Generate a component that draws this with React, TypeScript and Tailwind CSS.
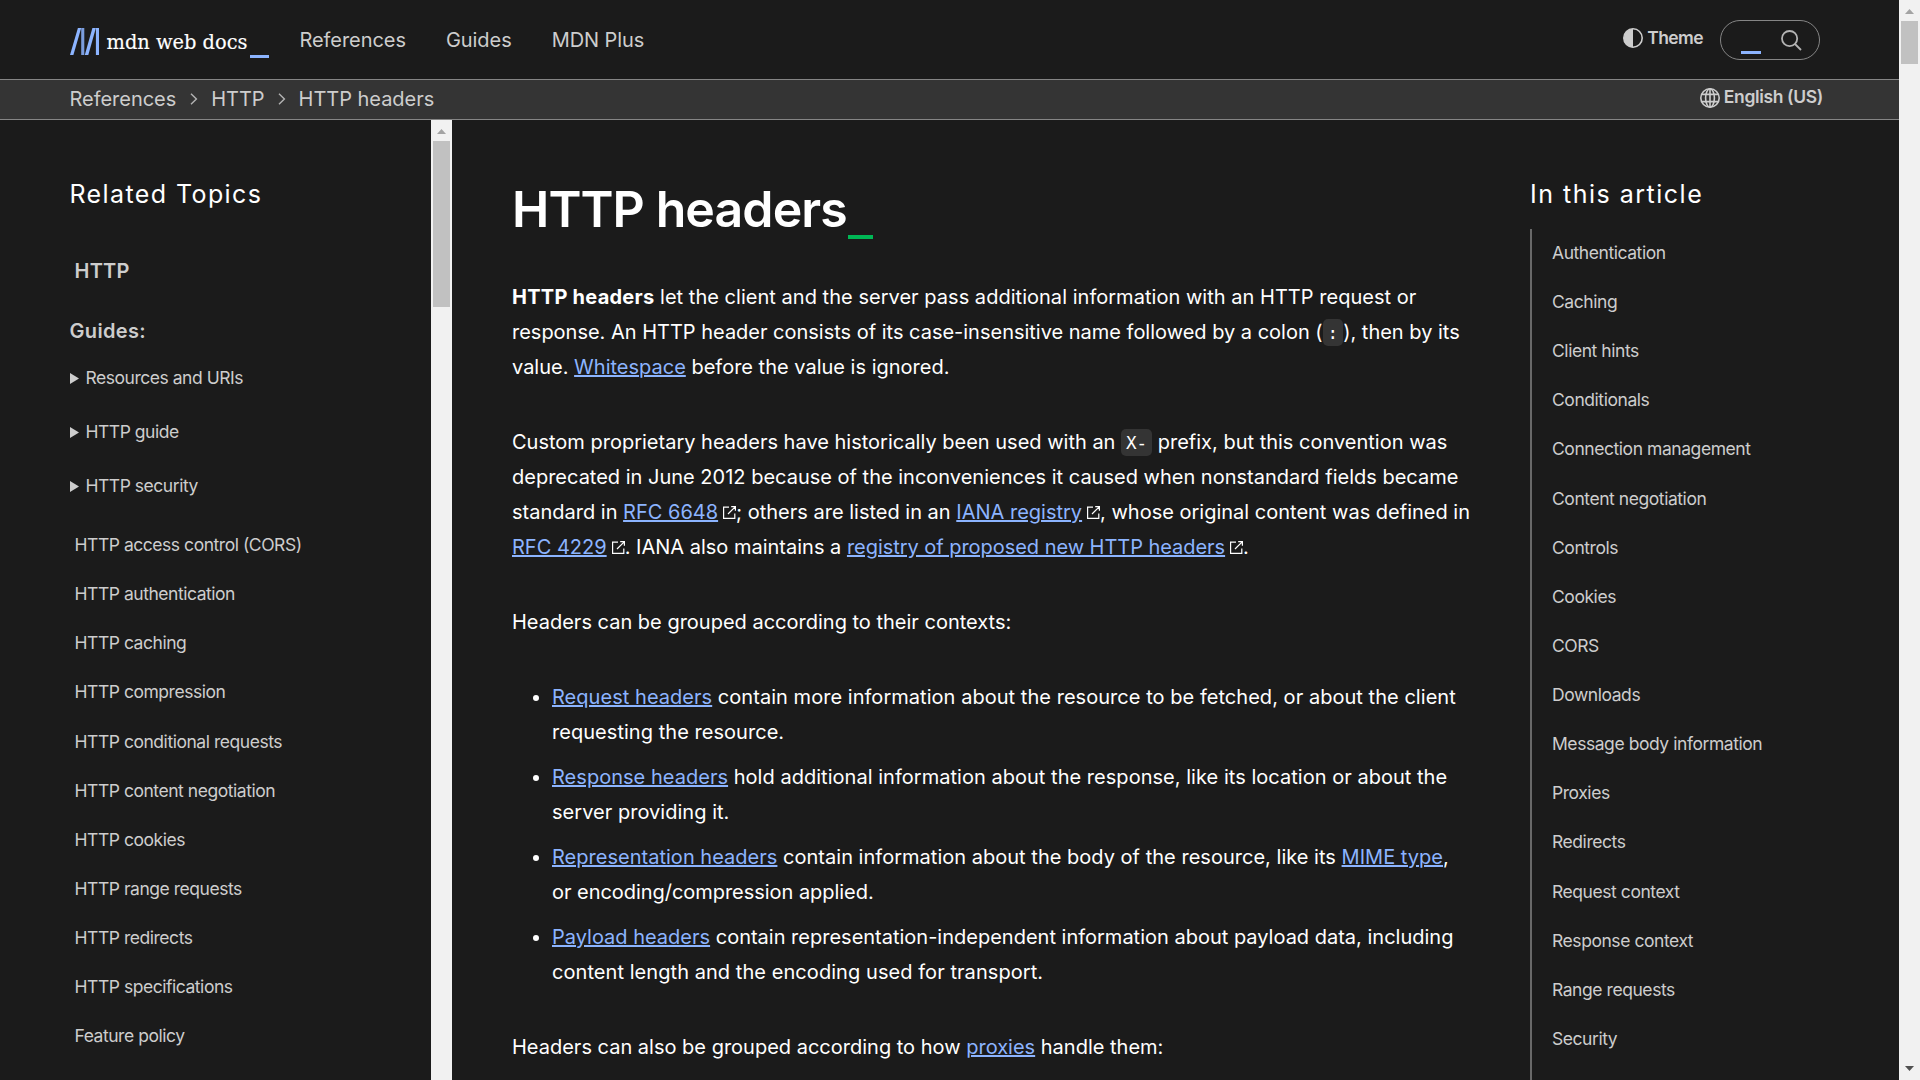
import React from "react";

const related = [
  "HTTP access control (CORS)",
  "HTTP authentication",
  "HTTP caching",
  "HTTP compression",
  "HTTP conditional requests",
  "HTTP content negotiation",
  "HTTP cookies",
  "HTTP range requests",
  "HTTP redirects",
  "HTTP specifications",
  "Feature policy",
];

const toc = [
  "Authentication",
  "Caching",
  "Client hints",
  "Conditionals",
  "Connection management",
  "Content negotiation",
  "Controls",
  "Cookies",
  "CORS",
  "Downloads",
  "Message body information",
  "Proxies",
  "Redirects",
  "Request context",
  "Response context",
  "Range requests",
  "Security",
];

function Logo() {
  return (
    <svg width="200" height="36" viewBox="0 0 200 36" className="block">
      <g fill="#8cb4ff">
        <path d="M7.9 4H11.2L3.4 31H0z" />
        <path d="M11.2 4h3.1v27h-3.1z" opacity="0.85" />
        <path d="M22.4 4h3.5l-7.6 27h-3.5z" />
        <path d="M25.9 4H29v27h-3.1z" />
        <path d="M180 31h19v3h-19z" />
      </g>
      <text
        x="36.5"
        y="25"
        fill="#fff"
        stroke="#fff"
        strokeWidth="0.15"
        fontFamily="'DejaVu Serif', serif"
        fontSize="21"
        textLength="141"
        lengthAdjust="spacingAndGlyphs"
      >
        mdn web docs
      </text>
    </svg>
  );
}

function Chevron() {
  return (
    <svg width="8" height="12" viewBox="0 0 8 12" fill="none" stroke="#b3b3b3" strokeWidth="1.4">
      <path d="M1 0.8l5.4 5.2L1 11.2" />
    </svg>
  );
}

function ThemeIcon() {
  return (
    <svg width="20" height="20" viewBox="0 0 20 20">
      <circle cx="10" cy="10" r="9.2" fill="none" stroke="#cdcdcd" strokeWidth="1.6" />
      <path d="M10 0.8a9.2 9.2 0 0 0 0 18.4z" fill="#cdcdcd" />
    </svg>
  );
}

function SearchIcon() {
  return (
    <svg width="21" height="21" viewBox="0 0 21 21" fill="none" stroke="#b3b3b3" strokeWidth="1.8">
      <circle cx="8.6" cy="8.6" r="7.6" />
      <path d="M14 14l6 6" />
    </svg>
  );
}

function Globe() {
  return (
    <svg width="20" height="20" viewBox="0 0 20 20" fill="none" stroke="#cdcdcd" strokeWidth="1.6">
      <circle cx="10" cy="10" r="9.2" />
      <ellipse cx="10" cy="10" rx="4.4" ry="9.2" />
      <path d="M10 .8v18.4M1.8 6.4h16.4M1.8 13.6h16.4" />
    </svg>
  );
}

function External() {
  return (
    <svg width="13" height="13" viewBox="0 0 13 13" fill="none" stroke="#fff" className="ml-[5px] inline-block align-baseline">
      <path d="M6 1.2H.6v11.2h11.2V7.5" strokeWidth="1.2" />
      <path d="M8.2.6h4.2v4.2M12.2.8L5 8" strokeWidth="1.2" />
    </svg>
  );
}

function Link({ children }: { children: React.ReactNode }) {
  return (
    <a className="text-[#8cb4ff] underline decoration-2">{children}</a>
  );
}

function Code({ children }: { children: React.ReactNode }) {
  return (
    <code className="rounded-[5px] bg-[#343434] px-[5px] py-[3.5px] align-[1px] font-['DejaVu_Sans_Mono',monospace] text-[17.5px] leading-none">
      {children}
    </code>
  );
}

function Scrollbar({ thumb, down }: { thumb: string; down?: boolean }) {
  return (
    <div className="flex h-full w-[21px] shrink-0 flex-col items-center bg-[#f1f1f1]">
      <svg width="21" height="21" viewBox="0 0 21 21" className="shrink-0">
        <path d="M6 14h9l-4.5-5z" fill="#a3a3a3" />
      </svg>
      <div className={"w-[17px] shrink-0 bg-[#c1c1c1] " + thumb} />
      {down && (
        <svg width="21" height="21" viewBox="0 0 21 21" className="mt-auto shrink-0">
          <path d="M6 7h9l-4.5 5z" fill="#505050" />
        </svg>
      )}
    </div>
  );
}

export default function App() {
  return (
    <div className="flex h-[1080px] w-[1920px] overflow-hidden bg-[#1b1b1b] font-[Inter,sans-serif] text-[#cdcdcd]">
      <div className="flex min-w-0 flex-1 flex-col">
        <header className="flex h-20 shrink-0 items-start border-b border-[#858585] pl-[70px] pr-[79px]">
          <div className="mt-6 w-[229.5px]">
            <Logo />
          </div>
          <nav className="mt-[25px] flex gap-10 text-[20px] leading-[30px] tracking-[-0.06px]">
            <a>References</a>
            <a>Guides</a>
            <a>MDN Plus</a>
          </nav>
          <div className="ml-auto mt-7 flex items-start gap-1 text-[17.5px] font-semibold leading-5 tracking-[-0.6px]">
            <ThemeIcon />
            <span>Theme</span>
          </div>
          <div className="ml-[17px] mt-5 flex h-10 w-[100px] rounded-full border border-[#858585] pl-5">
            <div className="mt-[30px] h-[3px] w-5 bg-[#8cb4ff]" />
            <div className="ml-[19.5px] mt-[9px]">
              <SearchIcon />
            </div>
          </div>
        </header>

        <div className="flex h-10 shrink-0 items-start justify-between border-b border-[#858585] bg-[#343434] pl-[69.5px] pr-[76px]">
          <div className="mt-[3px] flex items-center text-[20px] leading-[32px] tracking-[-0.03px]">
            <span>References</span>
            <span className="ml-[14px] mr-[13px]"><Chevron /></span>
            <span>HTTP</span>
            <span className="ml-[13px] mr-[13px]"><Chevron /></span>
            <span>HTTP headers</span>
          </div>
          <div className="mt-2 flex items-start gap-1 text-[17.5px] font-semibold leading-5 tracking-[-0.36px]">
            <Globe />
            <span className="-mt-px">English (US)</span>
          </div>
        </div>

        <div className="flex min-h-0 flex-1">
          <aside className="w-[431px] shrink-0 overflow-hidden pl-[69.5px]">
            <h2 className="mt-[55.5px] text-[25px] leading-[36px] tracking-[1.4px] text-white">Related Topics</h2>
            <div className="mt-[44.5px] pl-[5px] text-[20px] font-semibold leading-[30px] tracking-[0.25px]">HTTP</div>
            <div className="mt-[30px] text-[20px] font-semibold leading-[30px] tracking-[0.35px]">Guides:</div>
            <div className="mt-[5px] text-[17.5px] tracking-[-0.47px]">
              {["Resources and URIs", "HTTP guide", "HTTP security"].map((t) => (
                <div key={t} className="flex h-[54px] items-center gap-[7px]">
                  <svg width="9" height="11" viewBox="0 0 9 11" fill="#cdcdcd">
                    <path d="M0 0l9 5.5L0 11z" />
                  </svg>
                  <span>{t}</span>
                </div>
              ))}
            </div>
            <ul className="mt-[7.6px] pl-[5px] text-[17.5px] tracking-[-0.46px]">
              {related.map((t) => (
                <li key={t} className="flex h-[49.125px] items-center">{t}</li>
              ))}
            </ul>
          </aside>
          <Scrollbar thumb="h-[166px]" />

          <main className="ml-[60px] w-[960px] shrink-0 text-[20px] leading-[35px] text-white">
            <h1 className="mt-[59px] flex h-[60px] text-[50px] font-semibold leading-[60px] tracking-[-0.9px] [font-optical-sizing:none]">
              HTTP headers
              <span className="ml-px mt-[56px] h-1 w-[25px] bg-[#00b755]" />
            </h1>
            <p className="mt-[41px] whitespace-nowrap">
              <span className="tracking-[0.03px]"><strong className="font-bold tracking-[0.25px]">HTTP headers</strong> let the client and the server pass additional information with an HTTP request or</span><br />
              <span className="tracking-[-0.01px]">response. An HTTP header consists of its case-insensitive name followed by a colon (</span><Code>:</Code>), then by its<br />
              value. <Link>Whitespace</Link> before the value is ignored.
            </p>
            <p className="mt-10 whitespace-nowrap">
              Custom proprietary headers have historically been used with an <Code>X-</Code> prefix, but this convention was<br />
              deprecated in June 2012 because of the inconveniences it caused when nonstandard fields became<br />
              standard in <Link>RFC 6648</Link><External />; others are listed in an <Link>IANA registry</Link><External />, whose original content was defined in<br />
              <Link>RFC 4229</Link><External />. IANA also maintains a <span className="tracking-[-0.04px]"><Link>registry of proposed new HTTP headers</Link></span><External />.
            </p>
            <p className="mt-10">Headers can be grouped according to their contexts:</p>
            <ul className="mt-10 flex list-disc flex-col gap-[10px] whitespace-nowrap pl-10">
              <li className="tracking-[0.04px]">
                <Link>Request headers</Link> contain more information about the resource to be fetched, or about the client<br />
                requesting the resource.
              </li>
              <li className="tracking-[0.03px]">
                <Link>Response headers</Link> hold additional information about the response, like its location or about the<br />
                server providing it.
              </li>
              <li className="tracking-[0.02px]">
                <Link>Representation headers</Link> contain information about the body of the resource, like its <Link>MIME type</Link>,<br />
                <span className="tracking-[-0.04px]">or encoding/compression applied.</span>
              </li>
              <li>
                <Link>Payload headers</Link> contain representation-independent information about payload data, including<br />
                <span className="tracking-[0.06px]">content length and the encoding used for transport.</span>
              </li>
            </ul>
            <p className="mt-10">
              Headers can also be grouped according to how <Link>proxies</Link> handle them:
            </p>
          </main>

          <aside className="ml-[58px] flex-1 overflow-hidden">
            <h2 className="mt-[55.5px] text-[25px] leading-[36px] tracking-[1.5px] text-white">In this article</h2>
            <ul className="mt-[17px] border-l-2 border-[#696969] pb-10 pl-5 text-[17.5px] tracking-[-0.44px]">
              {toc.map((t) => (
                <li key={t} className="flex h-[49.125px] items-center">{t}</li>
              ))}
            </ul>
          </aside>
        </div>
      </div>
      <Scrollbar thumb="h-[43px]" down />
    </div>
  );
}
